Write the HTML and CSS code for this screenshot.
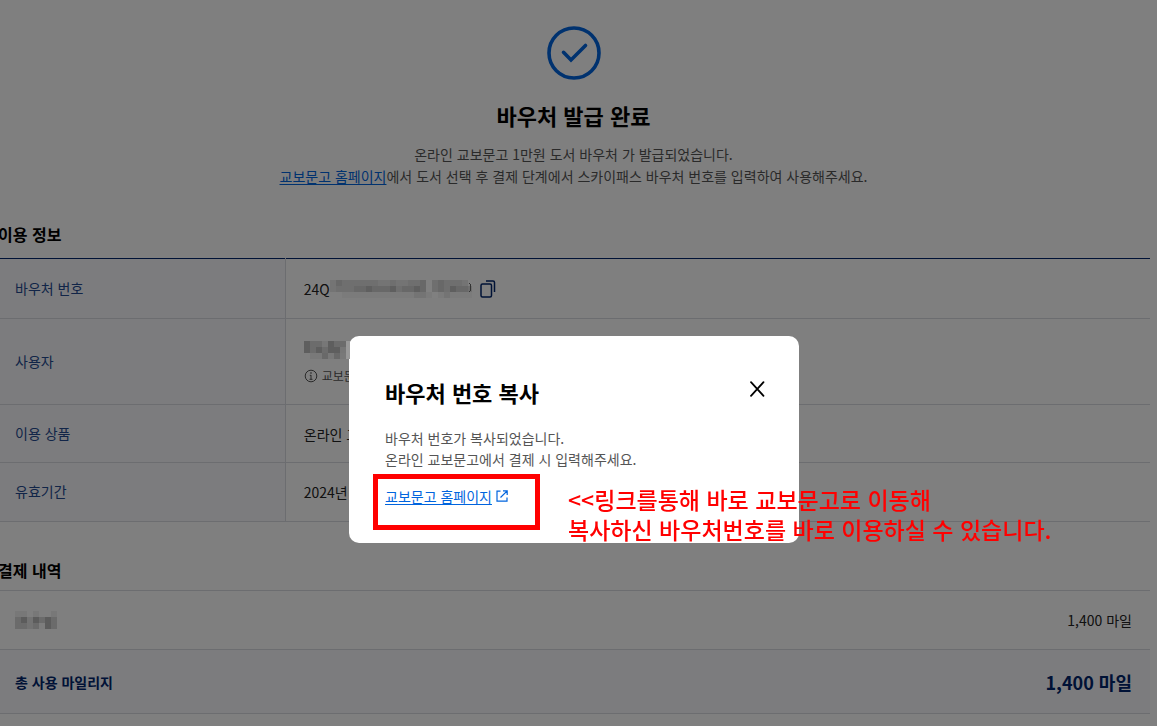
FILE: index.html
```html
<!DOCTYPE html>
<html lang="ko">
<head>
<meta charset="utf-8">
<title>바우처 발급 완료</title>
<link rel="stylesheet" href="styles.css">
</head>
<body>
<main class="page">
  <header class="result">
    <svg class="result-icon" viewBox="0 0 54 54" fill="none" stroke="currentColor" aria-hidden="true">
      <circle cx="27" cy="27" r="25" stroke-width="3.6"/>
      <path d="M16.500 26.300L24 34L38.500 19.500" stroke-width="3.600" stroke-linecap="round"/>
    </svg>
    <h1 class="result-title">바우처 발급 완료</h1>
    <p class="result-text">온라인 교보문고 1만원 도서 바우처 가 발급되었습니다.<br><a class="link" href="#">교보문고 홈페이지</a>에서 도서 선택 후 결제 단계에서 스카이패스 바우처 번호를 입력하여 사용해주세요.</p>
  </header>

  <section class="section">
    <h2 class="section-title">이용 정보</h2>
    <table class="info">
      <tr class="row-number">
        <th scope="row">바우처 번호</th>
        <td>
          <div class="voucher">
            <span>24Q</span>
            <svg class="mosaic mosaic-number" viewBox="0 0 142 18" shape-rendering="crispEdges" aria-hidden="true">
              <path fill="#6f6f6f" d="M0 0h142v12H0z"/><path fill="#7b7b7b" d="M12 12h130v6H12z"/>
              <path fill="#686868" d="M6 0h6v6H6zM24 6h12v6H24zM42 6h18v6H42zM72 6h12v6H72zM90 0h6v12h-6zM108 0h6v12h-6zM126 6h12v6h-12z"/>
              <path fill="#5f5f5f" d="M36 6h6v6h-6zM60 6h6v6h-6zM84 6h6v6h-6zM120 6h6v6h-6z"/>
              <path fill="#747474" d="M0 0h6v12H0zM48 0h12v6H48zM66 0h12v6H66zM84 12h12v6H84zM114 12h6v6h-6zM132 0h6v6h-6z"/>
              <path fill="#808080" d="M96 0h6v12h-6zM102 12h6v6h-6zM138 0h4v6h-4z"/>
              <path fill="none" stroke="#333" d="M139.500 3q2.500 4.500 0 9"/>
            </svg>
            <button class="icon-button copy" type="button" aria-label="번호 복사">
              <svg viewBox="0 0 16 18" fill="none" stroke="currentColor" stroke-width="1.500" aria-hidden="true"><rect x="1" y="4" width="10.500" height="13" rx="1.500"/><path d="M6 1H13Q14.500 1 14.500 2.500V12"/></svg>
            </button>
          </div>
        </td>
      </tr>
      <tr class="row-user">
        <th scope="row">사용자</th>
        <td>
          <svg class="mosaic mosaic-user" viewBox="0 0 46 18" shape-rendering="crispEdges" aria-hidden="true">
            <path fill="#6c6c6c" d="M0 0h42v12H0z"/><path fill="#797979" d="M6 12h36v6H6z"/>
            <path fill="#5e5e5e" d="M0 0h6v12H0zM12 6h6v6h-6zM24 0h6v12h-6zM30 6h6v6h-6z"/>
            <path fill="#777" d="M18 0h6v6h-6zM36 6h6v6h-6z"/><path fill="#696969" d="M18 12h6v6h-6zM30 12h6v6h-6z"/>
            <path fill="#999" d="M42 0h4v18h-4z"/>
          </svg>
          <p class="note">
            <svg viewBox="0 0 14 14" fill="none" stroke="currentColor" aria-hidden="true"><circle cx="7" cy="7" r="5.800"/><path d="M7 6v4.500M5.800 6.300H7M5.500 10.300h3"/><circle cx="7" cy="4" r=".4"/></svg>
            <span>교보문</span>
          </p>
        </td>
      </tr>
      <tr>
        <th scope="row">이용 상품</th>
        <td>온라인 교</td>
      </tr>
      <tr class="row-last">
        <th scope="row">유효기간</th>
        <td>2024년</td>
      </tr>
    </table>
  </section>

  <section class="section payment">
    <h2 class="section-title">결제 내역</h2>
    <dl class="bill">
      <div class="bill-row">
        <dt>
          <svg class="mosaic mosaic-item" viewBox="0 0 42 18" shape-rendering="crispEdges" aria-hidden="true">
            <path fill="#787878" d="M0 0h12v6H0zM18 0h6v6h-6zM36 0h6v6h-6z"/>
            <path fill="#6b6b6b" d="M0 6h42v12H0z"/>
            <path fill="#5c5c5c" d="M6 6h6v6H6zM18 6h6v6h-6zM30 6h6v12h-6z"/>
            <path fill="#737373" d="M12 6h6v12h-6z"/><path fill="#7d7d7d" d="M24 12h6v6h-6z"/>
          </svg>
        </dt>
        <dd>1,400 마일</dd>
      </div>
      <div class="bill-row bill-total">
        <dt>총 사용 마일리지</dt>
        <dd>1,400 마일</dd>
      </div>
    </dl>
  </section>
</main>

<div class="overlay">
  <div class="modal" role="dialog" aria-modal="true" aria-labelledby="modal-title">
    <div class="modal-head">
      <h2 class="modal-title" id="modal-title">바우처 번호 복사</h2>
      <button class="icon-button close" type="button" aria-label="닫기">
        <svg viewBox="0 0 16 16" fill="none" stroke="currentColor" stroke-width="1.800" stroke-linecap="round" aria-hidden="true"><path d="M2 1.200l12.500 13.600M14.500 1.200l-12.500 13.600"/></svg>
      </button>
    </div>
    <p class="modal-text">바우처 번호가 복사되었습니다.<br>온라인 교보문고에서 결제 시 입력해주세요.</p>
    <a class="modal-link" href="#"><span class="link">교보문고 홈페이지</span><svg viewBox="0 0 12 12" fill="none" stroke="currentColor" stroke-width="1.200" aria-hidden="true"><path d="M4.500 1.200H1v10h10V7.500M7 .8h4.200V5M11.200.8L4.500 7.500"/></svg></a>
    <span class="highlight"></span>
    <p class="callout">&lt;&lt;링크를통해 바로 교보문고로 이동해<br>복사하신 바우처번호를 바로 이용하실 수 있습니다.</p>
  </div>
</div>
</body>
</html>
```

FILE: styles.css
```css
* { box-sizing: border-box; }

body {
  margin: 0;
  background: #fff;
  color: #222;
  font: 14px/22px "Noto Sans CJK KR", sans-serif;
  overflow: hidden;
}

h1, h2, p, dl, dd { margin: 0; }
svg { display: block; }

.page { margin: 0 7px 0 -3px; }

.link {
  color: #0064de;
  text-decoration: underline;
  text-underline-offset: 2px;
}

.icon-button {
  padding: 0;
  border: 0;
  background: none;
  color: inherit;
}

.result {
  display: flex;
  flex-direction: column;
  align-items: center;
  padding-top: 26px;
  text-align: center;
}
.result-icon { width: 54px; height: 54px; color: #0064de; }
.result-title {
  margin-top: 19px;
  color: #000;
  font-size: 22px;
  line-height: 32px;
  font-weight: 700;
}
.result-text { margin-top: 12px; color: #555; }

.section { margin-top: 36px; }
.section-title {
  padding-left: 1px;
  color: #000;
  font-size: 16px;
  line-height: 22px;
  font-weight: 700;
}

.info {
  width: 100%;
  margin-top: 13px;
  border-collapse: collapse;
  border-top: 1px solid #00256c;
}
.info tr { height: 58px; }
.info .row-number { height: 60px; }
.info .row-user { height: 86px; }
.info .row-last { height: 59px; }
.info th, .info td {
  padding: 0 18px;
  border-bottom: 1px solid #d9dbe1;
  text-align: left;
}
.info th {
  width: 25%;
  padding-bottom: 2px;
  border-right: 1px solid #d9dbe1;
  background: #f9f9fc;
  color: #244a91;
  font-weight: 400;
}
.info .row-user td { padding-top: 4px; }

.voucher { display: flex; align-items: center; }
.mosaic { position: relative; z-index: 2; }
.mosaic-number { width: 142px; height: 18px; }
.mosaic-user { width: 46px; height: 18px; }
.mosaic-item { width: 42px; height: 18px; }
.copy { margin-left: 8px; color: #00256c; }
.copy svg { width: 16px; height: 18px; }

.note {
  display: flex;
  align-items: center;
  gap: 4px;
  margin-top: 7px;
  color: #555;
  font-size: 12px;
  line-height: 20px;
}
.note svg { width: 14px; height: 14px; }

.payment { margin-top: 37px; }
.bill { margin-top: 9px; border-top: 1px solid #d9dbe1; }
.bill-row {
  display: flex;
  align-items: center;
  justify-content: space-between;
  height: 59px;
  padding: 0 18px;
  border-bottom: 1px solid #d9dbe1;
}
.bill-total {
  height: 64px;
  background: #f9f9fc;
  color: #00256c;
  font-weight: 700;
}
.bill-total dd { font-size: 18px; }

.overlay {
  position: fixed;
  inset: 0;
  z-index: 1;
  display: flex;
  align-items: flex-start;
  justify-content: center;
  padding: 336px 9px 0 0;
  background: rgba(0, 0, 0, .5);
}
.modal {
  position: relative;
  width: 450px;
  padding: 36px 34px 36px 36px;
  border-radius: 10px;
  background: #fff;
}
.modal-head { display: flex; justify-content: space-between; align-items: flex-start; }
.modal-title {
  color: #000;
  font-size: 22px;
  line-height: 40px;
  font-weight: 700;
}
.close { margin-top: 9px; color: #000; }
.close svg { width: 16px; height: 16px; }
.modal-text { margin-top: 16px; color: #555; line-height: 21px; }
.modal-link {
  display: flex;
  align-items: center;
  gap: 4px;
  margin-top: 15px;
  color: #0064de;
  text-decoration: none;
}
.modal-link svg { width: 12px; height: 12px; }

.highlight {
  position: absolute;
  left: 24px;
  top: 138px;
  width: 167px;
  height: 56px;
  border: 5px solid #f00;
}
.callout {
  position: absolute;
  left: 219px;
  top: 148px;
  color: #f00;
  font-size: 23px;
  line-height: 30px;
  font-weight: 500;
  white-space: nowrap;
}
```
